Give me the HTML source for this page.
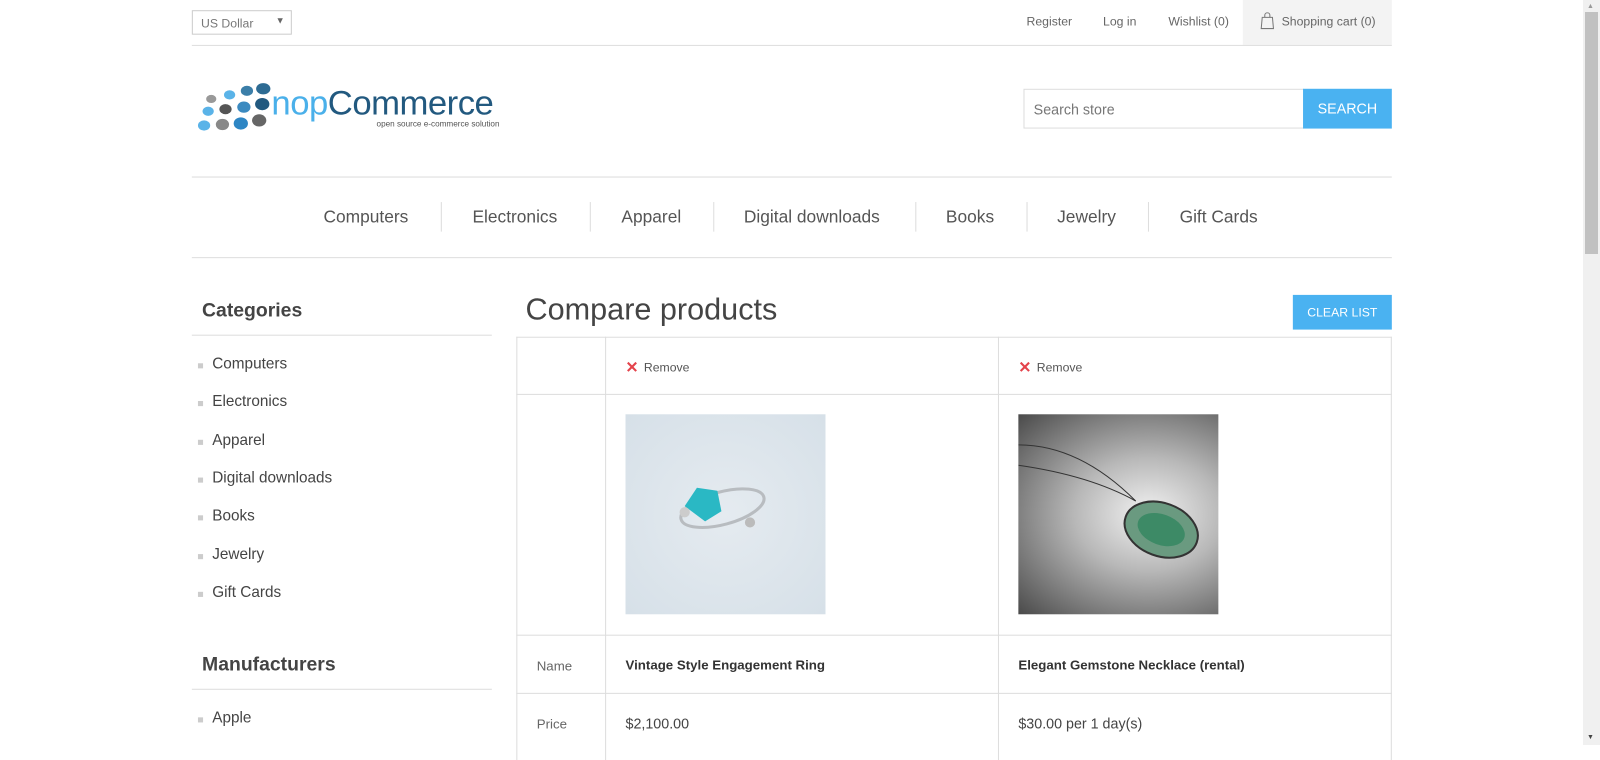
<!DOCTYPE html>
<html><head><meta charset="utf-8"><style>
*{box-sizing:border-box;margin:0;padding:0}
body{width:1600px;height:745px;overflow:hidden;background:#fff;font-family:"Liberation Sans",Arial,sans-serif;color:#444;position:relative}
#w{position:absolute;left:0;top:0;width:1568px;height:730px;transform:scale(1.0204);transform-origin:0 0}
.a{position:absolute}
.sb{position:absolute;left:1583px;top:0;width:17px;height:745px;background:#f0f0f0}
.thumb{position:absolute;left:2px;top:12px;width:13px;height:242px;background:#c1c1c1}
.menu span{position:absolute;top:203px;font-size:17px;color:#555}
.sep{position:absolute;top:198px;width:1px;height:29px;background:#ddd}
.side li{list-style:none;position:absolute;left:208px;font-size:15px;color:#444}
.side li:before{content:"";position:absolute;left:-14px;top:8px;width:5px;height:5px;background:#ccc}
.h{position:absolute;background:#ddd;height:1px}
.v{position:absolute;background:#ddd;width:1px}
.t{position:absolute;font-size:13px}
</style></head><body>
<div id="w">
<div class="a" style="left:188px;top:10px;width:98px;height:24px;border:1px solid #ccc;font-size:12px;color:#777;padding:5px 8px">US Dollar<span style="position:absolute;right:6px;top:4px;font-size:9px;color:#666">▼</span></div>
<div class="a" style="left:1218px;top:0;width:146px;height:44px;background:#f3f3f3"></div>
<div class="t" style="left:1006px;top:14px;font-size:12px;color:#666">Register</div>
<div class="t" style="left:1081px;top:14px;font-size:12px;color:#666">Log in</div>
<div class="t" style="left:1145px;top:14px;font-size:12px;color:#666">Wishlist (0)</div>
<svg class="a" style="left:1235px;top:12px" width="14" height="17" viewBox="0 0 14 17"><path d="M2 5h10l1 11H1z M4.5 5V3a2.5 2.5 0 0 1 5 0v2" fill="none" stroke="#777" stroke-width="1"/></svg>
<div class="t" style="left:1256px;top:14px;font-size:12px;color:#666">Shopping cart (0)</div>
<div class="h" style="left:188px;top:44px;width:1176px"></div>
<svg class="a" style="left:188px;top:76px" width="80" height="58" viewBox="188 76 80 58">
<ellipse cx="207" cy="97" rx="5" ry="4" fill="#999"/><ellipse cx="225" cy="93" rx="5.5" ry="4.5" fill="#5ab3e8"/><ellipse cx="242" cy="89" rx="6" ry="5" fill="#3b7ea8"/><ellipse cx="258" cy="87" rx="7" ry="5.5" fill="#2d6b93"/>
<ellipse cx="204" cy="109" rx="5.5" ry="4.5" fill="#5ab3e8"/><ellipse cx="221" cy="107" rx="6" ry="5" fill="#555"/><ellipse cx="239" cy="105" rx="6.5" ry="5.5" fill="#3b8ac0"/><ellipse cx="257" cy="102" rx="7" ry="6" fill="#22597f"/>
<ellipse cx="200" cy="123" rx="6" ry="5" fill="#5ab3e8"/><ellipse cx="218" cy="122" rx="6.5" ry="5.5" fill="#888"/><ellipse cx="236" cy="121" rx="7" ry="6" fill="#2e86c4"/><ellipse cx="254" cy="118" rx="7" ry="6" fill="#666"/>
</svg>
<div class="a" style="left:266px;top:82px;font-size:34px;letter-spacing:-0.5px"><span style="color:#4ab0ea">nop</span><span style="color:#22597f">Commerce</span></div>
<div class="a" style="left:369px;top:117px;font-size:8px;color:#555">open source e-commerce solution</div>
<div class="a" style="left:1003px;top:87px;width:275px;height:39px;border:1px solid #ddd;font-size:14px;color:#777;padding:11px 9px">Search store</div>
<div class="a" style="left:1277px;top:87px;width:87px;height:39px;background:#4ab2f1;color:#fff;font-size:14px;text-align:center;line-height:39px">SEARCH</div>
<div class="h" style="left:188px;top:173px;width:1176px"></div>
<div class="h" style="left:188px;top:252px;width:1176px"></div>
<div class="menu"><span style="left:317px">Computers</span><span style="left:463px">Electronics</span><span style="left:609px">Apparel</span><span style="left:729px">Digital downloads</span><span style="left:927px">Books</span><span style="left:1036px">Jewelry</span><span style="left:1156px">Gift Cards</span></div>
<div class="sep" style="left:432px"></div><div class="sep" style="left:578px"></div><div class="sep" style="left:699px"></div><div class="sep" style="left:897px"></div><div class="sep" style="left:1006px"></div><div class="sep" style="left:1125px"></div>
<div class="a" style="left:198px;top:294px;font-size:19px;font-weight:bold;color:#444">Categories</div>
<div class="h" style="left:188px;top:328px;width:294px"></div>
<ul class="side"><li style="top:348px">Computers</li><li style="top:385px">Electronics</li><li style="top:423px">Apparel</li><li style="top:460px">Digital downloads</li><li style="top:497px">Books</li><li style="top:535px">Jewelry</li><li style="top:572px">Gift Cards</li><li style="top:695px">Apple</li></ul>
<div class="a" style="left:198px;top:641px;font-size:19px;font-weight:bold;color:#444">Manufacturers</div>
<div class="h" style="left:188px;top:675px;width:294px"></div>
<div class="a" style="left:515px;top:287px;font-size:30px;color:#444">Compare products</div>
<div class="a" style="left:1267px;top:289px;width:97px;height:34px;background:#4ab2f1;color:#fff;font-size:12px;text-align:center;line-height:34px">CLEAR LIST</div>
<div class="h" style="left:506px;top:330px;width:858px"></div>
<div class="h" style="left:506px;top:386px;width:858px"></div>
<div class="h" style="left:506px;top:622px;width:858px"></div>
<div class="h" style="left:506px;top:679px;width:858px"></div>
<div class="v" style="left:506px;top:330px;height:415px"></div>
<div class="v" style="left:593px;top:330px;height:415px"></div>
<div class="v" style="left:978px;top:330px;height:415px"></div>
<div class="v" style="left:1363px;top:330px;height:415px"></div>
<div class="t" style="left:613px;top:351px;color:#e4434b;font-size:15px;font-weight:bold">✕</div><div class="t" style="left:631px;top:353px;font-size:12px;color:#555">Remove</div>
<div class="t" style="left:998px;top:351px;color:#e4434b;font-size:15px;font-weight:bold">✕</div><div class="t" style="left:1016px;top:353px;font-size:12px;color:#555">Remove</div>
<div class="a" style="left:613px;top:406px;width:196px;height:196px;background:radial-gradient(circle at 50% 50%,#e5ebf0,#d6e0e8)"><svg width="196" height="196"><ellipse cx="95" cy="92" rx="42" ry="16" fill="none" stroke="#b8bcc0" stroke-width="3" transform="rotate(-15 95 92)"/><path d="M58 90l12-18 20 3 4 20-16 10z" fill="#2ab8c4"/><circle cx="58" cy="96" r="5" fill="#ccc"/><circle cx="122" cy="106" r="5" fill="#bbb"/></svg></div>
<div class="a" style="left:998px;top:406px;width:196px;height:196px;background:radial-gradient(ellipse at 65% 50%,#f2f2f2 0%,#b8b8b8 40%,#4a4a4a 100%)"><svg width="196" height="196"><path d="M0 30 Q60 30 115 85" fill="none" stroke="#333" stroke-width="1"/><path d="M0 50 Q70 60 115 85" fill="none" stroke="#333" stroke-width="1"/><ellipse cx="140" cy="113" rx="37" ry="26" fill="#6a9a80" stroke="#333" stroke-width="2" transform="rotate(20 140 113)"/><ellipse cx="140" cy="113" rx="24" ry="15" fill="#3d8a66" transform="rotate(20 140 113)"/></svg></div>
<div class="t" style="left:526px;top:645px;color:#666">Name</div>
<div class="t" style="left:613px;top:644px;font-weight:bold;color:#333">Vintage Style Engagement Ring</div>
<div class="t" style="left:998px;top:644px;font-weight:bold;color:#333">Elegant Gemstone Necklace (rental)</div>
<div class="t" style="left:526px;top:702px;color:#666">Price</div>
<div class="t" style="left:613px;top:701px;font-size:14px;color:#444">$2,100.00</div>
<div class="t" style="left:998px;top:701px;font-size:14px;color:#444">$30.00 per 1 day(s)</div>
</div>
<div class="sb"><div class="thumb"></div><div class="a" style="left:4px;top:3px;font-size:7px;color:#999">▲</div><div class="a" style="left:4px;top:734px;font-size:7px;color:#444">▼</div></div>
</body></html>
